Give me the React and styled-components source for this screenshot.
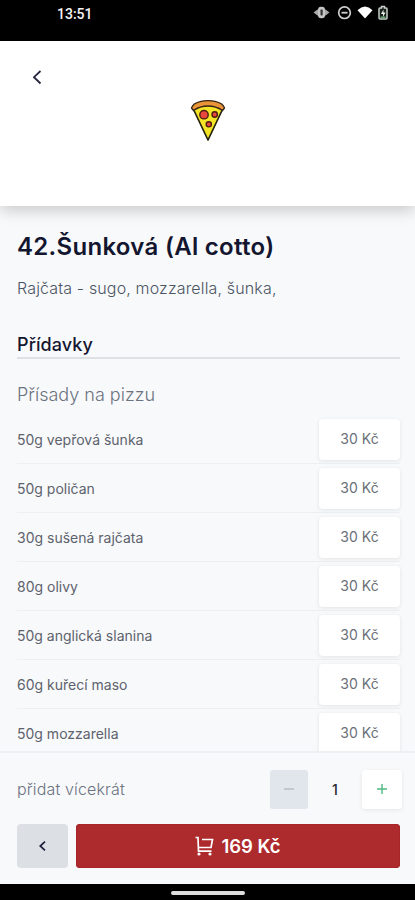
import React from "react";
import styled, { createGlobalStyle } from "styled-components";

const GlobalStyle = createGlobalStyle`
  * { box-sizing: border-box; }
  body { margin: 0; background: #000; font-family: Inter, "Liberation Sans", sans-serif; }
  button { font: inherit; border: 0; padding: 0; }
`;

const Screen = styled.div`
  width: 415px;
  height: 900px;
  display: flex;
  flex-direction: column;
  overflow: hidden;
  background: #f8f9fb;
`;

const StatusBar = styled.div`
  flex: 0 0 41px;
  display: flex;
  justify-content: space-between;
  align-items: flex-start;
  padding: 5px 26px 0 57px;
  background: #000;
`;

const Clock = styled.span`
  font: 500 14px/18px Roboto, sans-serif;
  color: #f4f4f4;
`;

const StatusIcons = styled.svg`
  display: block;
  width: 76px;
  height: 18px;
  margin-top: -1px;
`;

const Header = styled.header`
  flex: 0 0 165px;
  display: flex;
  flex-direction: column;
  align-items: center;
  background: #fff;
  box-shadow: 0 5px 14px rgba(0, 0, 0, 0.18);
  z-index: 1;
`;

const HeaderBack = styled.button`
  align-self: flex-start;
  display: flex;
  width: 16px;
  height: 20px;
  margin: 26px 0 0 29px;
  background: none;
`;

const Pizza = styled.svg`
  width: 36px;
  height: 44px;
  margin-top: 12px;
`;

const Content = styled.main`
  flex: 1 1 0;
  min-height: 0;
  overflow: hidden;
  padding: 25px 15px 0 17px;
`;

const Title = styled.h1`
  margin: 0;
  font-size: 24px;
  line-height: 32px;
  font-weight: 600;
  letter-spacing: 0.3px;
  color: #14162f;
`;

const Description = styled.p`
  margin: 13px 0 0;
  font-size: 16px;
  line-height: 24px;
  font-weight: 300;
  letter-spacing: 0.15px;
  color: #4b5563;
`;

const SectionTitle = styled.h2`
  margin: 32px 0 0;
  padding-top: 1px;
  height: 27px;
  border-bottom: 2px solid #dfe0e3;
  font-size: 18px;
  line-height: 24px;
  font-weight: 500;
  letter-spacing: 0.1px;
  color: #14162f;
`;

const GroupTitle = styled.h3`
  margin: 22px 0 6px;
  font-size: 18px;
  line-height: 28px;
  font-weight: 300;
  color: #6b7280;
`;

const Row = styled.div`
  display: flex;
  align-items: center;
  justify-content: space-between;
  height: 49px;
  border-bottom: 1px solid #eeeff1;
`;

const RowLabel = styled.span`
  padding-top: 1px;
  font-size: 14px;
  line-height: 20px;
  font-weight: 400;
  color: #5d626c;
`;

const PriceButton = styled.button`
  width: 81px;
  height: 41px;
  padding-bottom: 1px;
  border-radius: 4px;
  background: #fff;
  box-shadow: 0 1px 4px rgba(0, 0, 0, 0.09);
  font-size: 14px;
  color: #6b7078;
`;

const Footer = styled.footer`
  flex: 0 0 133px;
  padding: 16px 15px 0 17px;
  border-top: 2px solid #eeeff2;
  background: #f8f9fb;
`;

const QuantityRow = styled.div`
  display: flex;
  align-items: center;
  justify-content: space-between;
  height: 40px;
  margin-right: -2px;
`;

const QuantityLabel = styled.span`
  padding-bottom: 1px;
  font-size: 16px;
  font-weight: 300;
  letter-spacing: 0.15px;
  color: #6b7280;
`;

const Stepper = styled.div`
  display: grid;
  grid-template-columns: 38px 54px 40px;
  align-items: center;
  justify-items: center;
`;

const StepButton = styled.button`
  display: flex;
  align-items: center;
  justify-content: center;
  width: 100%;
  height: 39px;
  border-radius: 3px;
  background: ${(p) => (p.$muted ? "#e1e5ec" : "#fff")};
  box-shadow: ${(p) => (p.$muted ? "none" : "0 1px 4px rgba(0, 0, 0, 0.08)")};
`;

const Count = styled.span`
  font-size: 14px;
  font-weight: 500;
  color: #272833;
`;

const Actions = styled.div`
  display: grid;
  grid-template-columns: 51px 1fr;
  gap: 8px;
  height: 44px;
  margin-top: 15px;
`;

const BackButton = styled.button`
  display: flex;
  align-items: center;
  justify-content: center;
  border-radius: 4px;
  background: #dce0e4;
`;

const CartButton = styled.button`
  display: flex;
  align-items: center;
  justify-content: center;
  gap: 7px;
  border-radius: 4px;
  background: #ad2b2d;
  box-shadow: inset 0 0 0 1px #a8252a;
  color: #fff;
  font-size: 18.5px;
  font-weight: 600;
`;

const SystemNav = styled.div`
  flex: 0 0 16px;
  display: flex;
  justify-content: center;
  background: #000;
`;

const HomeHandle = styled.div`
  width: 74px;
  height: 4px;
  margin-top: 7px;
  border-radius: 2px;
  background: #dedede;
`;

const extras = [
  "50g vepřová šunka",
  "50g poličan",
  "30g sušená rajčata",
  "80g olivy",
  "50g anglická slanina",
  "60g kuřecí maso",
  "50g mozzarella",
];

export default function App() {
  return (
    <Screen>
      <GlobalStyle />
      <StatusBar>
        <Clock>13:51</Clock>
        <StatusIcons viewBox="0 0 76 18">
          <path d="M0.500 8.500 4.500 5.500h8l4 3-4 3h-8Z" fill="#a8a8a8" />
          <rect x="5" y="2.800" width="7" height="11.400" rx="3" fill="#c4c4c4" />
          <rect x="7.500" y="5.500" width="2.200" height="6" rx="0.800" fill="#333" />
          <circle cx="31.500" cy="8.700" r="5.800" fill="none" stroke="#d0d0d0" strokeWidth="1.700" />
          <path d="M28.500 8.700h6" stroke="#d0d0d0" strokeWidth="1.800" />
          <path d="M44.500 6.200Q52 -1 59.500 6.200L52 14.500Z" fill="#fff" />
          <path d="M67 4h1.500V2.500h3V4H73q1 0 1 1v9q0 1-1 1h-6q-1 0-1-1V5q0-1 1-1Z" fill="#17211b" stroke="#c9cec9" strokeWidth="1.500" />
          <path d="M67.500 12.500h5v2h-5Z" fill="#68a476" />
          <path d="M70.500 5.500 68 10h2v3l2.500-4.500h-2Z" fill="#f0f0f0" />
        </StatusIcons>
      </StatusBar>
      <Header>
        <HeaderBack aria-label="Zpět">
          <svg width="16" height="20" viewBox="0 0 16 20" fill="none" stroke="#252640" strokeWidth="1.800">
            <path d="M11.500 4 5 10.200l6.500 6.300" />
          </svg>
        </HeaderBack>
        <Pizza viewBox="0 0 36 44">
          <path d="M3.500 10.500Q18 2 32.500 10.500L18 41Z" fill="#f5e527" stroke="#25230f" strokeWidth="1.700" strokeLinejoin="round" />
          <path d="M1.500 9Q3 4.500 10 2.700Q18 .4 26 2.700Q33 4.500 34.500 9L32.500 11.500Q26 7 18 7T3.500 11.500Z" fill="#e99537" stroke="#352315" strokeWidth="1.300" strokeLinejoin="round" />
          <g fill="#e9473d" stroke="#4b1e12" strokeWidth="1.400">
            <circle cx="14" cy="15.700" r="4.200" />
            <circle cx="24.700" cy="15.500" r="2.700" />
            <circle cx="18.800" cy="25.300" r="2.600" />
          </g>
        </Pizza>
      </Header>
      <Content>
        <Title>42.Šunková (Al cotto)</Title>
        <Description>Rajčata - sugo, mozzarella, šunka,</Description>
        <SectionTitle>Přídavky</SectionTitle>
        <GroupTitle>Přísady na pizzu</GroupTitle>
        {extras.map((name) => (
          <Row key={name}>
            <RowLabel>{name}</RowLabel>
            <PriceButton>30 Kč</PriceButton>
          </Row>
        ))}
      </Content>
      <Footer>
        <QuantityRow>
          <QuantityLabel>přidat vícekrát</QuantityLabel>
          <Stepper>
            <StepButton $muted aria-label="Ubrat">
              <svg width="12" height="12" stroke="#b4b9c0" strokeWidth="1.300"><path d="M1 6h10" /></svg>
            </StepButton>
            <Count>1</Count>
            <StepButton aria-label="Přidat">
              <svg width="12" height="12" stroke="#4fb981" strokeWidth="1.400"><path d="M1 6h10M6 1v10" /></svg>
            </StepButton>
          </Stepper>
        </QuantityRow>
        <Actions>
          <BackButton aria-label="Zpět">
            <svg width="7" height="10" viewBox="0 0 7 10" fill="none" stroke="#1c1e3c" strokeWidth="1.700">
              <path d="M6 .7 1.200 5 6 9.300" />
            </svg>
          </BackButton>
          <CartButton>
            <svg width="19" height="20" viewBox="0 0 19 20" fill="none" stroke="#fff" strokeWidth="1.700">
              <path d="M.5 1.500H3L3.500 15.200H16.500M7 3.500H17.500L16 11.500H3.500" />
              <g fill="#fff" stroke="none"><circle cx="4" cy="18" r="1.600" /><circle cx="15" cy="18" r="1.600" /></g>
            </svg>
            169 Kč
          </CartButton>
        </Actions>
      </Footer>
      <SystemNav><HomeHandle /></SystemNav>
    </Screen>
  );
}
